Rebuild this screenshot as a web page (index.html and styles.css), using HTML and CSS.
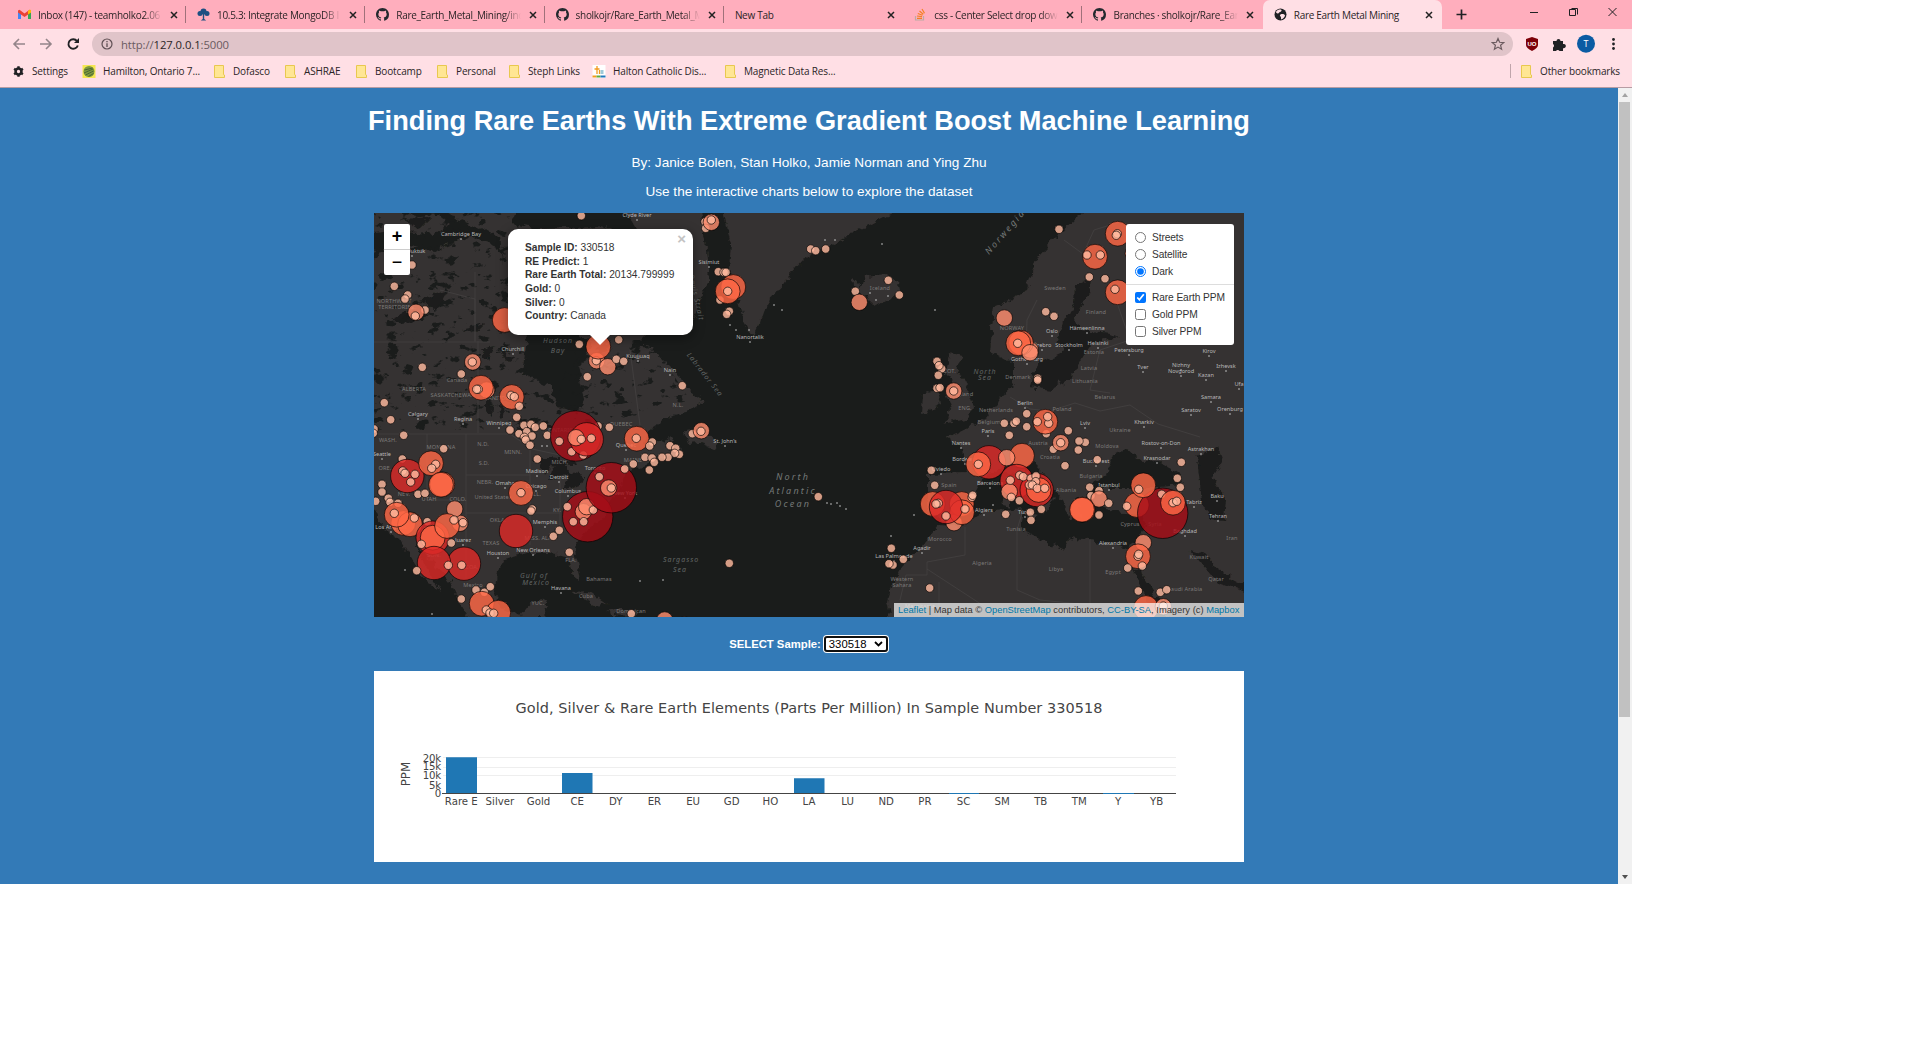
FILE: index.html
```
<!DOCTYPE html>
<html lang="en">
<head>
<meta charset="utf-8">
<title>Rare Earth Metal Mining</title>
<link rel="stylesheet" href="styles.css">
</head>
<body>
<svg class="defs" width="0" height="0">
  <symbol id="close" viewBox="0 0 8 8"><path d="M1 1l6 6M7 1l-6 6" stroke="#222" stroke-width="1.5"/></symbol>
  <symbol id="github" viewBox="0 0 16 16"><path fill="#24292e" d="M8 0C3.58 0 0 3.58 0 8c0 3.54 2.29 6.53 5.47 7.59.4.07.55-.17.55-.38 0-.19-.01-.82-.01-1.49-2.01.37-2.53-.49-2.69-.94-.09-.23-.48-.94-.82-1.13-.28-.15-.68-.52-.01-.53.63-.01 1.08.58 1.23.82.72 1.21 1.87.87 2.33.66.07-.52.28-.87.51-1.07-1.78-.2-3.64-.89-3.64-3.95 0-.87.31-1.59.82-2.15-.08-.2-.36-1.02.08-2.12 0 0 .67-.21 2.2.82a7.6 7.6 0 014 0c1.53-1.04 2.2-.82 2.2-.82.44 1.1.16 1.92.08 2.12.51.56.82 1.27.82 2.15 0 3.07-1.87 3.75-3.65 3.95.29.25.54.73.54 1.48 0 1.07-.01 1.93-.01 2.2 0 .21.15.46.55.38A8.01 8.01 0 0016 8c0-4.42-3.58-8-8-8z"/></symbol>
  <symbol id="folder" viewBox="0 0 11 13"><path d="M.5.5h9v9l1 .5v2.500H.5z" fill="#ffe694" stroke="#e8c84f"/></symbol>
</svg>
<div class="window">
  <div class="tabs">
    <div class="tab"><svg class="fav" viewBox="0 0 13 13"><path d="M0 3v8h3V6z" fill="#4285f4"/><path d="M13 3v8h-3V6z" fill="#34a853"/><path d="M0 2.500l1.500-.8L6.500 5.500l5-3.800 1.500.8v2L6.500 9 0 4.500z" fill="#ea4335"/><path d="M10 3l2-1.500 1 1v2L10 6.500z" fill="#fbbc04"/></svg><span class="name">Inbox (147) - teamholko2.06</span><svg class="x"><use href="#close"/></svg></div>
    <div class="tab"><svg class="fav" viewBox="0 0 13 13"><g fill="#1d4f82"><circle cx="6.500" cy="3.500" r="3"/><circle cx="3" cy="5.500" r="2.500"/><circle cx="10" cy="5.500" r="2.500"/><path d="M5.800 5h1.400v6l2 1.500H3.800l2-1.500z"/></g></svg><span class="name">10.5.3: Integrate MongoDB I</span><svg class="x"><use href="#close"/></svg></div>
    <div class="tab"><svg class="fav"><use href="#github"/></svg><span class="name">Rare_Earth_Metal_Mining/ind</span><svg class="x"><use href="#close"/></svg></div>
    <div class="tab"><svg class="fav"><use href="#github"/></svg><span class="name">sholkojr/Rare_Earth_Metal_M</span><svg class="x"><use href="#close"/></svg></div>
    <div class="tab plain"><span class="name">New Tab</span><svg class="x"><use href="#close"/></svg></div>
    <div class="tab"><svg class="fav" viewBox="0 0 13 13" fill="none"><path d="M1.500 8v4h8V8" stroke="#bcaaa4" stroke-width="1.200"/><path d="M3 10.300h5M3 8l5 .7M3.800 5.500l4.700 1.700M5.500 3l3.800 3.200M8 1l2.500 4.200" stroke="#f48024" stroke-width="1.200"/></svg><span class="name">css - Center Select drop down</span><svg class="x"><use href="#close"/></svg></div>
    <div class="tab"><svg class="fav"><use href="#github"/></svg><span class="name">Branches · sholkojr/Rare_Eart</span><svg class="x"><use href="#close"/></svg></div>
    <div class="tab active"><svg class="fav" viewBox="0 0 13 13"><circle cx="6.500" cy="6.500" r="6" fill="#202124"/><path d="M6 1.500c3 0 1 2.500 0 2.500S5 6 3.500 5.500 2 4 2 4s1-2.500 4-2.500zM6.500 6.500c2-1 4.500 0 4.500 1s-2 3.500-3.500 4c-1-.5 0-2-.8-2.800S5.500 7 6.500 6.500z" fill="#ffdfe5"/></svg><span class="name">Rare Earth Metal Mining</span><svg class="x"><use href="#close"/></svg></div>
    <svg class="controls" viewBox="0 0 190 29" fill="none" stroke="#202124"><path d="M14.500 14.500h10M19.500 9.500v10" stroke-width="1.700"/><path d="M88 12.500h8M127.500 9.500h6v6h-6zM129.500 8.500h6v6M166.500 8l8 8M174.500 8l-8 8"/></svg>
  </div>
  <div class="toolbar">
    <svg class="nav" viewBox="0 0 92 30" fill="none"><path d="M25 15H14M19 10l-5 5 5 5M40 15h11M46 10l5 5-5 5" stroke="#94858a" stroke-width="1.600"/><path d="M77 12a4.800 4.800 0 10.800 4.500" stroke="#202124" stroke-width="1.900"/><path d="M79 9v5h-5z" fill="#202124"/></svg>
    <div class="omnibox"><svg class="info" viewBox="0 0 12 12"><circle cx="6" cy="6" r="5" fill="none" stroke="#5f4f54" stroke-width="1.200"/><path d="M6 5.200v3.800M6 3v1.200" stroke="#5f4f54" stroke-width="1.300"/></svg><span class="url">http://<b>127.0.0.1</b>:5000</span><svg class="star" viewBox="0 0 14 14"><path d="M7 1.500l1.600 3.800 4.100.3-3.100 2.700 1 4L7 10.100l-3.600 2.200 1-4L1.300 5.600l4.100-.3z" fill="none" stroke="#6b5a5f" stroke-width="1.200"/></svg></div>
    <svg class="ext" viewBox="0 0 119 30"><path d="M19 8l6 2v6q0 3-6 6-6-3-6-6v-6z" fill="#7d0008"/><text x="19" y="17" class="ub">UO</text><path d="M40 12h3.500a2 2 0 114 0H50v3a2.200 2.200 0 110 4.200V22h-3.500a2 2 0 00-3.500 0h-3v-3.500a2 2 0 000-3.500z" fill="#202124"/><circle cx="73" cy="14.700" r="9" fill="#0b5ba3"/><text x="73" y="18" class="avatar">T</text><g fill="#202124"><circle cx="100.500" cy="10.500" r="1.400"/><circle cx="100.500" cy="15" r="1.400"/><circle cx="100.500" cy="19.500" r="1.400"/></g></svg>
  </div>
  <div class="bookmarks">
    <div class="bm"><svg viewBox="0 0 12 12"><circle cx="6" cy="6" r="3.200" fill="none" stroke="#202124" stroke-width="2.800"/><path d="M6 .3v2M6 9.700v2M1.200 3.100l1.600 1M9.200 7.900l1.600 1M1.200 8.900l1.600-1M9.200 4.100l1.600-1" stroke="#202124" stroke-width="2.600"/></svg>Settings</div>
    <div class="bm site"><svg viewBox="0 0 13 13"><path d="M0 0h13v13H0z" fill="#f4e651"/><circle cx="6.500" cy="6.500" r="5.500" fill="#7f9a3c"/><path d="M2 5l8-2M1.500 8l9-4M3 10l8-4M6 11.500l5-3" stroke="#3d5a34" stroke-width=".8"/></svg>Hamilton, Ontario 7...</div>
    <div class="bm"><svg><use href="#folder"/></svg>Dofasco</div>
    <div class="bm"><svg><use href="#folder"/></svg>ASHRAE</div>
    <div class="bm"><svg><use href="#folder"/></svg>Bootcamp</div>
    <div class="bm"><svg><use href="#folder"/></svg>Personal</div>
    <div class="bm"><svg><use href="#folder"/></svg>Steph Links</div>
    <div class="bm site"><svg viewBox="0 0 13 13"><path d="M0 0h13v13H0z" fill="#fff"/><path d="M2 4h5M4.500 1v8M7 5v4" stroke="#f39b1e" stroke-width="1.300"/><path d="M8 5h3v4H8z" fill="#9dc9d8"/><path d="M0 11.500h4" stroke="#f39b1e" stroke-width="2"/><path d="M4 11.500h4" stroke="#65ac3c" stroke-width="2"/><path d="M8 11.500h5" stroke="#2079bd" stroke-width="2"/></svg>Halton Catholic Dis...</div>
    <div class="bm"><svg><use href="#folder"/></svg>Magnetic Data Res...</div>
    <div class="bm other"><svg><use href="#folder"/></svg>Other bookmarks</div>
  </div>
  <div class="viewport">
    <main class="page">
      <h1>Finding Rare Earths With Extreme Gradient Boost Machine Learning</h1>
      <p>By: Janice Bolen, Stan Holko, Jamie Norman and Ying Zhu</p>
      <p>Use the interactive charts below to explore the dataset</p>
      <div class="map">
        <svg class="tiles" viewBox="374 213 870 404">
          <defs>
            <filter id="coast" x="-5%" y="-5%" width="110%" height="110%"><feTurbulence type="fractalNoise" baseFrequency=".13" numOctaves="3" seed="4"/><feDisplacementMap in="SourceGraphic" scale="9" xChannelSelector="R" yChannelSelector="G"/></filter>
            <filter id="lakes" x="0" y="0" width="100%" height="100%" color-interpolation-filters="sRGB"><feTurbulence type="fractalNoise" baseFrequency=".07 .11" numOctaves="4" seed="9"/><feColorMatrix values="0 0 0 0 .102  0 0 0 0 .11  0 0 0 0 .106  14 0 0 0 -8.4"/><feComposite in2="SourceGraphic" operator="in"/></filter>
          </defs>
          <g filter="url(#coast)">
            <path class="land" d="M364 205H424L450 224 434 234 400 230 364 234ZM435 205H470L480 212 500 205H520L512 224 535 228 600 226 660 240 690 262 700 300 690 330 650 330 635 345 653 347 663 360 680 377 690 392 704 402 690 411 670 416 655 426 643 443 655 444 668 437 684 453 664 456 648 463 627 473 622 485 613 500 603 517 587 530 574 547 579 567 581 582 573 576 567 556 550 553 527 553 504 560 496 573 494 590 500 606 524 617 520 630H475L463 607 450 582 430 560 415 543 425 565 440 590 424 580 410 556 400 540 385 531 376 510 364 500V248L380 252 402 244 433 251 470 236 500 248 508 300 528 336 522 373 550 387 558 407 576 412 584 400 578 367 592 344 570 330 520 334 505 290 500 236 460 220Z"/>
            <path class="land" d="M722 205H908L880 219 848 236 827 247 803 260 790 275 777 290 764 310 759 326 753 338 746 330 737 298 729 268 731 245ZM853 279L862 286 866 276 884 273 899 284 901 292 887 301 880 305 868 300 855 292ZM622 205L700 205 706 240 710 280 696 300 650 250ZM990 352L994 306 1026 292 1037 258 1057 236 1080 214 1100 205H1255V630H893L887 601 892 585 902 567 921 547 938 526 960 527 984 513 1023 509 1020 530 1034 537 1063 550 1070 537 1090 540 1127 547 1138 540 1146 526 1142 514 1124 513 1100 507 1090 494 1104 487 1120 487 1160 487 1183 485 1178 473 1160 461 1142 462 1127 449 1113 455 1106 475 1087 486 1094 500 1075 497 1083 517 1070 519 1061 500 1045 477 1034 463 1025 467 1036 480 1054 499 1045 514 1040 500 1016 476 1003 468 990 472 977 488 965 513 944 520 927 511 927 474 966 473 963 449 947 438 970 427 985 418 1000 398 1014 385 1014 360 1005 361ZM950 353L964 356 956 367 967 387 974 407 966 419 943 424 952 410 945 395 953 384 945 372ZM923 394L938 389 941 405 922 413ZM684 432L703 430 718 444 714 449 700 443 688 444ZM532 603L548 600 544 617H520ZM570 593L590 592 607 604 596 606 580 597ZM608 609L638 611 634 616 610 615ZM1002 490L1011 491 1011 508 1003 506ZM1018 510L1038 515 1035 520ZM380 425L370 415 374 432Z"/>
            <path class="water" d="M1063 352L1057 342 1064 322 1074 303 1075 286 1090 280 1088 294 1074 318 1078 330 1110 333 1118 337 1092 343 1085 354 1073 376 1052 390 1030 387 1034 370 1039 361 1054 356ZM1197 457L1217 448 1222 462 1212 478 1226 498 1224 520 1211 518 1202 500ZM1190 550L1205 554 1218 570 1244 584V592L1218 583ZM1133 567L1140 570 1172 623H1156ZM532 459L548 459 575 462 572 466 550 464 544 476 542 463ZM549 479L552 468 563 463 568 472 583 476 579 485 566 490 568 474 556 478ZM486 395L493 407 492 417 486 410ZM420 300L448 290 437 311ZM392 318L419 307 428 317 407 323ZM462 329L485 323 475 333ZM480 350L494 346 488 359ZM390 212L405 220 430 218 420 228ZM500 404L508 411 501 419ZM497 350L509 362 514 358Z"/>
          </g>
          <path d="M374 213H510V340L560 385 580 340H650L690 400 600 430H374Z" filter="url(#lakes)"/>
          <path class="border" d="M374 434H510L532 449 560 455M478 341V433M374 342H490M475 272V341M440 290L475 299V342M427 434V500M466 434V580M466 475H530M466 513H560M427 500H466M530 433V545M560 475V530M630 350L640 425M1010 397L1030 409 1050 411 1075 403 1100 411 1130 405 1158 424 1200 437M1023 510L1017 530V590L1040 600 1090 605M1090 540V605H1150M900 600L906 575H927V562L965 555V527M927 569L990 610M939 582V617M1037 300L1027 320 1026 350M1064 240L1083 254 1094 230 1120 222M1116 300L1130 340 1100 350 1090 390 1110 393"/>
          <g id="labels"></g>
          <g id="samples"></g>
        </svg>
        <div class="zoom"><span>+</span><span>−</span></div>
        <div class="popup"><i>×</i><b>Sample ID:</b> 330518<br><b>RE Predict:</b> 1<br><b>Rare Earth Total:</b> 20134.799999<br><b>Gold:</b> 0<br><b>Silver:</b> 0<br><b>Country:</b> Canada</div>
        <div class="layers">
          <label><input type="radio" name="base">Streets</label>
          <label><input type="radio" name="base">Satellite</label>
          <label><input type="radio" name="base" checked>Dark</label>
          <hr>
          <label><input type="checkbox" checked>Rare Earth PPM</label>
          <label><input type="checkbox">Gold PPM</label>
          <label><input type="checkbox">Silver PPM</label>
        </div>
        <div class="attribution"><a>Leaflet</a> | Map data © <a>OpenStreetMap</a> contributors, <a>CC-BY-SA</a>, Imagery (c) <a>Mapbox</a></div>
      </div>
      <div class="picker"><b>SELECT Sample:</b><span class="select">330518<svg viewBox="0 0 9 6"><path d="M1 1l3.500 3.500L8 1" fill="none" stroke="#000" stroke-width="1.800"/></svg></span></div>
      <svg class="chart" viewBox="374 671 870 191">
        <text class="title" x="515.500" y="712.500" textLength="587">Gold, Silver &amp; Rare Earth Elements (Parts Per Million) In Sample Number 330518</text>
        <path d="M443 757.500h733M443 767.500h733M443 775.500h733" stroke="#eee"/>
        <g class="ytick"><text x="441" y="761.500">20k</text><text x="441" y="770">15k</text><text x="441" y="779">10k</text><text x="441" y="788.500">5k</text><text x="441" y="797">0</text></g>
        <path d="M442 793.500h734" stroke="#444"/>
        <path d="M446 757.300h31V793h-31zM562 773h30.500v20H562zM794 778.300h30.500V793H794zM949 793h30v1h-30zM1103 793h31v1h-31z" fill="#1f77b4"/>
        <text class="ylabel" transform="translate(410 774) rotate(-90)">PPM</text>
        <g class="xtick" id="xticks"></g>
      </svg>
    </main>
    <div class="scroll"><svg viewBox="0 0 14 14"><path d="M4 9h6L7 5z" fill="#a3a3a3"/></svg><div class="thumb"></div><svg viewBox="0 0 14 14"><path d="M4 5h6l-3 4z" fill="#505050"/></svg></div>
  </div>
</div>
<script src="app.js"></script>
</body>
</html>
```
FILE: styles.css
```
* { box-sizing: border-box; }
body { margin: 0; background: #fff; font-family: "Liberation Sans", Arial, sans-serif; }
.defs { position: absolute; }
.window { width: 1632px; height: 884px; overflow: hidden; font-family: "Open Sans", "Noto Sans", sans-serif; font-size: 10px; color: #2b2426; }

.tabs { height: 29px; background: #ffaebd; display: grid; grid-template-columns: 187px repeat(6, 179.3px) 179.5px 190px; }
.tab { display: flex; align-items: center; padding: 0 8px 0 10px; border-right: 1px solid transparent; position: relative; min-width: 0; }
.tab:first-child { padding-left: 18px; }
.tab:not(.plain):not(.active)::after { content: ""; width: 1px; height: 17px; background: #a0717a; position: absolute; top: 6px; right: 0; }
.tab:nth-child(7)::after { display: none; }
.fav { width: 13px; height: 13px; flex: none; margin-right: 7px; }
.name { flex: 1; white-space: nowrap; overflow: hidden; letter-spacing: -.3px; mask-image: linear-gradient(90deg, #000 86%, transparent 100%); margin-right: 8px; }
.active .name, .plain .name { mask-image: none; }
.x { width: 8px; height: 8px; flex: none; }
.active { background: #ffdfe5; border-radius: 7px 7px 0 0; padding-left: 11px; }
.controls { width: 190px; height: 29px; }

.toolbar { height: 30px; background: #ffdfe5; display: flex; align-items: center; }
.nav { width: 92px; height: 30px; }
.omnibox { width: 1421px; height: 24px; border-radius: 12px; background: #e0c4c9; display: flex; align-items: center; padding: 0 8px 0 9px; }
.info { width: 12px; height: 12px; margin-right: 8px; }
.url { flex: 1; font-size: 11.3px; letter-spacing: -.08px; color: #6a5a5f; }
.url b { font-weight: 400; color: #2b2426; }
.star { width: 14px; height: 14px; }
.ext { width: 119px; height: 30px; }
.ub { font: bold 6px "Liberation Sans", sans-serif; fill: #fff; text-anchor: middle; }
.avatar { font-size: 9px; fill: #fff; text-anchor: middle; }

.bookmarks { height: 29px; padding-left: 13px; background: #ffdfe5; border-bottom: 1px solid #b79ca3; display: grid; grid-template-columns: 69px 132px 71px 71px 81px 72px 83px 133px 785px 120px; align-items: center; padding-bottom: 4px; }
.bm { display: flex; align-items: center; white-space: nowrap; letter-spacing: -.14px; }
.bm svg { width: 11px; height: 13px; margin-right: 8px; }
.bm.site svg { width: 14px; margin-right: 7px; }
.bm.other { border-left: 1px solid #c0a5ab; padding-left: 10px; }

.viewport { display: flex; height: 796px; }
.page { width: 1618px; background: #337ab7; color: #fff; display: flex; flex-direction: column; align-items: center; font-family: "Liberation Sans", Arial, sans-serif; }
.page h1 { margin: 17px 0 0; font-size: 27.2px; line-height: 31px; white-space: nowrap; }
.page p { margin: 18px 0 0; height: 11px; font-size: 13.6px; line-height: 15px; white-space: nowrap; }
.page h1 + p { margin-top: 19px; }
.map { position: relative; width: 870px; height: 404px; margin-top: 18px; background: #1a1c1b; overflow: hidden; flex: none; }
.tiles { display: block; width: 870px; height: 404px; }
.land { fill: #343130; }
.water { fill: #1a1c1b; }
.border { fill: none; stroke: #464343; stroke-width: .7; }
.place { font: 5.600px "Noto Sans", sans-serif; fill: #b9b9b9; text-anchor: middle; }
.country { font: 5.600px "Noto Sans", sans-serif; letter-spacing: .15px; fill: #7c7a79; text-anchor: middle; }
.sea { font: italic 7px "Noto Sans", sans-serif; letter-spacing: 1px; fill: #626665; text-anchor: middle; }
.ocean { font: italic 9px "Noto Sans", sans-serif; letter-spacing: 2.2px; fill: #747877; text-anchor: middle; }
.dot { fill: #ccc; }
.s { stroke: #000; stroke-opacity: .72; stroke-width: .9; fill-opacity: .82; }
.s1 { fill: #ffb99f; } .s2 { fill: #ff8e6f; } .s3 { fill: #ff6845; } .s4 { fill: #dd2927; } .s5 { fill: #a70d17; }

.zoom { position: absolute; left: 10px; top: 11px; width: 26px; height: 51px; background: #fff; border-radius: 2px; color: #000; display: flex; flex-direction: column; text-align: center; font: bold 18px/25px "Liberation Sans", sans-serif; }
.zoom span + span { border-top: 1px solid #ccc; font-weight: 400; }
.popup { position: absolute; left: 134px; top: 16px; width: 185px; height: 106px; padding: 12px 0 0 17px; background: #fff; border-radius: 10px; color: #333; font-size: 10.2px; line-height: 13.65px; white-space: nowrap; box-shadow: 0 3px 12px rgba(0,0,0,.4); }
.popup::after { content: ""; position: absolute; left: 81px; top: 105px; border: 11px solid transparent; border-top-color: #fff; border-bottom: 0; }
.popup i { position: absolute; right: 7px; top: 4px; font: bold 15px/12px "Liberation Sans", sans-serif; color: #c3c3c3; }
.layers { position: absolute; right: 10px; top: 11px; width: 108px; height: 121px; padding: 5px 0 0 9px; background: #fff; border-radius: 3px; color: #333; font-size: 10.2px; letter-spacing: -.1px; }
.layers label { display: flex; align-items: center; height: 17px; }
.layers input { width: 11px; height: 11px; margin: 0 6px 0 0; }
.layers hr { margin: 4px 0 4px -9px; border: 0; border-top: 1px solid #ddd; }
.attribution { position: absolute; right: 0; bottom: 0; width: 350px; height: 14px; padding: 0 4px; background: rgba(255,255,255,.7); color: #333; font-size: 9.35px; line-height: 14px; white-space: nowrap; }
.attribution a { color: #0078a8; }

.picker { height: 54px; display: flex; align-items: center; gap: 2px; font-size: 11.300px; flex: none; }
.select { display: flex; align-items: center; justify-content: space-between; width: 64px; height: 16px; margin: 0 1px; padding: 0 3px 0 3px; border: 2px solid #101010; border-radius: 3px; background: #fff; color: #000; font-size: 11.3px; box-shadow: 0 0 0 1px #fff; }
.select svg { width: 9px; height: 6px; }
.chart { width: 870px; height: 191px; background: #fff; flex: none; font-family: Verdana, "DejaVu Sans", sans-serif; fill: #444; }
.title { font-size: 14.45px; }
.ytick { font-size: 10.2px; text-anchor: end; letter-spacing: -.2px; }
.xtick { font-size: 10.2px; text-anchor: middle; }
.ylabel { font-size: 11.9px; text-anchor: middle; }
.scroll { width: 14px; background: #f1f1f1; display: flex; flex-direction: column; }
.scroll svg { width: 14px; height: 14px; }
.thumb { width: 11px; height: 615px; margin: 0 2px auto 1px; background: #c1c1c1; }
```
FILE: app.js
```
const NS = 'http://www.w3.org/2000/svg';
const add = (parent, tag, attrs, text) => {
  const el = document.createElementNS(NS, tag);
  for (const k in attrs) el.setAttribute(k, attrs[k]);
  if (text) el.textContent = text;
  parent.appendChild(el);
};

// Sample markers grouped by tile origin; points are [x, y, class] at three units per pixel.
const radius = [0, 4.2, 8.2, 12.4, 16.7, 25.2];
const tiles = [
  { x: 360, y: 90, points: [
    [664,377,1],[156,525,1],[103,589,1],[143,615,1],[135,627,1],[195,660,1],[168,667,2],[166,678,1],[434,690,3],
    [1035,395,1],[1037,415,1],[1054,397,2],[1054,390,1],[1075,545,1],[1092,547,1],[1098,547,1],[1080,630,1],[1120,591,3],[1103,604,3],[1103,604,1],
    [1108,664,1],[1100,673,1],[1352,477,1],[1367,482,1],[1397,477,1],[1486,604,1],[1498,637,2],[776,749,1],[658,763,1]] },
  { x: 850, y: 90, points: [
    [115,571,1],[148,615,1],[627,418,1],[803,431,3],[802,431,1],[799,436,1],[735,500,3],[711,495,1],[751,495,1],[718,561,1],[765,566,1],
    [803,607,3],[795,598,1],[850,490,2],[845,540,1],[463,684,2],[587,665,1],[612,679,1],[541,780,2],[513,758,3],[505,760,3],[503,760,1]] },
  { x: 370, y: 340, points: [
    [157,82,1],[308,66,2],[307,66,1],[274,102,1],[350,150,2],[333,143,3],[325,148,1],[320,148,1],[425,171,3],[423,166,1],[433,170,1],[448,199,1],[440,232,1],
    [43,188,1],[62,239,1],[12,267,1],[10,280,1],[101,286,1],[221,326,1],[97,357,1],[420,270,1],[462,256,1],[483,253,1],[496,262,1],[520,258,1],[447,281,1],[470,275,1],[486,288,1],[463,292,1],[467,300,1],[532,286,1],[480,316,1],[502,357,1],
    [680,62,2],[679,62,1],[685,20,3],[713,80,2],[739,58,1],[761,64,1],[652,110,1],[937,137,1],
    [112,408,4],[98,393,1],[105,400,1],[135,403,1],[122,426,1],[183,370,3],[197,373,1],[185,385,1],[217,433,3],[213,434,3],[144,463,1],[165,460,1],[36,433,1],[36,456,1],[17,484,1],
    [453,459,3],[453,458,1],[487,507,1],[483,513,1],[55,475,1],[60,487,1],[84,490,1],[100,549,3],[120,553,3],[80,524,3],[73,520,1],[133,534,1],[172,545,1],
    [270,550,2],[254,507,2],[188,593,4],[188,593,3],[231,558,3],[252,540,1],[279,548,1],[244,609,1],[154,613,1],[438,573,4],[282,671,4],[275,676,1],[192,669,4],[235,676,1],[140,692,1],
    [684,258,1],[617,288,5],[605,335,1],[640,345,1],[650,298,4],[618,293,2],[568,304,1],[634,298,1],[664,295,1],[718,262,1],
    [800,296,3],[799,295,1],[847,306,1],[839,318,1],[900,317,1],[917,325,1],[928,343,1],[914,340,1],[894,352,1],[876,352,1],[825,352,1],[846,354,1],[853,367,1],[838,390,1],[790,372,1],[967,281,1],[994,272,2],[993,274,1],
    [653,530,5],[592,500,1],[640,515,2],[650,500,2],[670,510,1],[641,545,1],[610,545,1],[724,443,5],[716,444,2],[724,444,1],[688,410,1],[764,387,1],
    [568,571,1],[550,589,1],[598,637,1],[318,750,1],[343,757,1],[361,740,1],[274,777,1],[335,791,3],[385,818,3],[349,810,1],[360,819,1],[371,820,1],[784,821,1],[884,840,2],[943,855,2]] },
  { x: 700, y: 340, points: [[355,470,1],[88,670,1],[574,625,1],[610,658,1],[579,675,1],[567,671,1],[689,744,1]] },
  { x: 900, y: 340, points: [
    [111,64,1],[125,86,1],[117,77,1],[115,106,1],[111,145,1],[120,143,1],[161,153,2],[161,153,1],[390,38,2],[413,115,1],[413,120,1],
    [439,281,1],[436,245,3],[412,245,1],[446,250,1],[443,230,1],[380,221,1],[380,260,1],[313,250,1],[342,250,1],[349,244,1],[328,286,1],[505,272,1],[460,328,1],[482,308,2],[482,308,1],[556,307,1],[537,303,1],[535,330,1],[592,359,1],[495,377,1],
    [267,367,4],[235,373,3],[235,373,1],[366,347,3],[320,353,2],[104,436,1],[94,391,1],
    [350,423,4],[410,450,4],[328,455,2],[416,450,3],[331,421,1],[359,406,1],[370,410,1],[393,415,1],[408,408,1],[407,425,1],[388,435,1],[397,435,1],[412,445,1],[434,445,1],[334,472,1],[358,482,1],[317,523,1],[391,517,1],[393,541,1],[424,508,1],
    [98,492,3],[162,548,2],[185,492,3],[186,517,3],[138,501,4],[138,528,1],[195,507,1],[216,472,1],[218,466,1],[115,490,1],[108,492,1],
    [569,442,1],[597,452,1],[573,467,1],[597,477,2],[626,490,1],[548,509,3],[546,509,3],[597,525,1],
    [710,495,3],[680,499,1],[788,520,5],[730,436,3],[716,448,1],[785,463,1],[832,415,1],[841,442,1],[844,367,1],[819,488,3],[819,488,1],[830,484,1],
    [730,608,2],[714,649,3],[714,649,1],[716,643,1],[683,684,1],[727,678,1],[715,753,1],[781,757,1],[800,749,1],[738,804,3],[790,800,2],[790,798,1]] }
];
const samples = document.getElementById('samples');
for (const t of tiles)
  for (const [x, y, s] of t.points)
    add(samples, 'circle', { cx: (t.x + x / 3).toFixed(1), cy: (t.y + y / 3).toFixed(1), r: radius[s], class: 's s' + s });

const labels = document.getElementById('labels');
const names = {
  place: [[461,236,'Cambridge Bay'],[412,253,'Kugluktuk'],[637,217,'Clyde River'],[709,264,'Sisimiut'],[750,339,'Nanortalik'],[513,351,'Churchill'],[638,358,'Kuujjuaq'],[670,372,'Nain'],
    [418,416,'Calgary'],[463,421,'Regina'],[499,425,'Winnipeg'],[382,456,'Seattle'],[537,473,'Madison'],[559,479,'Detroit'],[505,485,'Omaha'],[536,488,'Chicago'],[568,493,'Columbus'],[545,524,'Memphis'],[533,552,'New Orleans'],[498,555,'Houston'],[463,542,'Juarez'],[595,470,'Toronto'],[626,447,'Quebec'],[625,495,'New York'],[725,443,'St. John’s'],[561,590,'Havana'],[391,529,'Los Angeles'],
    [1052,333,'Oslo'],[1087,330,'Hämeenlinna'],[1042,347,'Örebro'],[1069,347,'Stockholm'],[1098,345,'Helsinki'],[1129,352,'Petersburg'],[1027,361,'Gothenburg'],[1025,405,'Berlin'],[988,433,'Paris'],[961,445,'Nantes'],[965,461,'Bordeaux'],[941,471,'Oviedo'],[990,485,'Barcelona'],[984,512,'Algiers'],[1025,514,'Tunis'],[922,550,'Agadir'],[894,558,'Las Palmas de'],
    [1085,425,'Lviv'],[1144,424,'Kharkiv'],[1161,445,'Rostov-on-Don'],[1157,460,'Krasnodar'],[1201,451,'Astrakhan'],[1096,463,'Bucharest'],[1109,487,'Istanbul'],[1113,545,'Alexandria'],[1209,353,'Kirov'],[1143,369,'Tver'],[1181,367,'Nizhny'],[1181,373,'Novgorod'],[1206,377,'Kazan'],[1226,368,'Izhevsk'],[1239,386,'Ufa'],[1211,399,'Samara'],[1191,412,'Saratov'],[1230,411,'Orenburg'],[1217,498,'Baku'],[1218,518,'Tehran'],[1185,533,'Baghdad'],[1194,504,'Tabriz']],
  country: [[394,303,'NORTHWEST'],[396,309,'TERRITORIES'],[457,382,'Canada'],[414,391,'ALBERTA'],[453,397,'SASKATCHEWAN'],[498,400,'MANITOBA'],[561,432,'ONTARIO'],[621,426,'QUEBEC'],[388,442,'WASH.'],[441,449,'MONTANA'],[385,470,'ORE.'],[483,446,'N.D.'],[513,454,'MINN.'],[484,465,'S.D.'],[485,484,'NEBR.'],[404,496,'NEV.'],[429,501,'UTAH'],[458,501,'COLO.'],[493,499,'United States'],[536,496,'ILL.'],[560,464,'MICH.'],[498,522,'OKLA.'],[557,512,'KY.'],[491,545,'TEXAS'],[539,540,'MISS. ALA.'],[571,562,'FLA.'],[434,557,'SON.'],[472,569,'COA.'],[473,587,'Mexico'],[599,581,'Bahamas'],[586,598,'Cuba'],[633,462,'MAINE'],[678,407,'N.L.'],[880,290,'Iceland'],
    [1055,290,'Sweden'],[1096,314,'Finland'],[1012,330,'NORWAY'],[1094,354,'Estonia'],[1089,370,'Latvia'],[1085,383,'Lithuania'],[1018,379,'Denmark'],[1105,399,'Belarus'],[1062,411,'Poland'],[1120,432,'Ukraine'],[996,412,'Netherlands'],[989,424,'Belgium'],[1038,445,'Austria'],[1050,459,'Croatia'],[1107,448,'Moldova'],[1091,478,'Bulgaria'],[1066,492,'Albania'],[949,487,'Spain'],[940,541,'Morocco'],[982,565,'Algeria'],[1016,531,'Tunisia'],[1056,571,'Libya'],[1113,574,'Egypt'],[1185,591,'Saudi Arabia'],[1232,540,'Iran'],[1199,559,'Kuwait'],[1216,581,'Qatar'],[1130,526,'Cyprus'],[1155,526,'Syria'],[902,581,'Western'],[902,587,'Sahara'],[965,410,'ENG.'],[962,396,'England'],[948,373,'SCOT.'],[920,608,'Mauritania'],[538,605,'YUC.'],[631,613,'Dominican']],
  sea: [[558,343,'Hudson'],[558,353,'Bay'],[534,578,'Gulf of'],[536,585,'Mexico'],[681,562,'Sargasso'],[680,572,'Sea'],[985,374,'North'],[985,380,'Sea']],
  ocean: [[793,480,'North'],[793,494,'Atlantic'],[793,507,'Ocean']]
};
for (const cls in names)
  for (const [x, y, text] of names[cls]) {
    add(labels, 'text', { x, y, class: cls }, text);
    if (cls === 'place') add(labels, 'circle', { cx: x, cy: y + 3, r: .8, class: 'dot' });
  }
add(labels, 'text', { class: 'ocean', transform: 'translate(1010 231) rotate(-49)' }, 'Norwegian');
add(labels, 'text', { class: 'sea', transform: 'translate(703 376) rotate(52)' }, 'Labrador Sea');
add(labels, 'text', { class: 'sea', transform: 'translate(694 298) rotate(77)' }, 'Davis Strait');
for (const [x, y] of [[827,503],[831,504],[837,503],[840,506],[846,509],[663,580],[640,581],[993,505],[935,310],[774,305],[782,310],[882,244],[825,240],[835,240],[870,293],[876,300],[888,296],[730,325],[736,330],[749,330],[914,515],[891,536],[542,446],[547,446],[405,570],[432,614]])
  add(labels, 'circle', { cx: x, cy: y, r: .8, class: 'dot' });

const xticks = document.getElementById('xticks');
['Rare E', 'Silver', 'Gold', 'CE', 'DY', 'ER', 'EU', 'GD', 'HO', 'LA', 'LU', 'ND', 'PR', 'SC', 'SM', 'TB', 'TM', 'Y', 'YB']
  .forEach((name, i) => add(xticks, 'text', { x: 461.3 + i * 38.63, y: 804.5 }, name));
```
